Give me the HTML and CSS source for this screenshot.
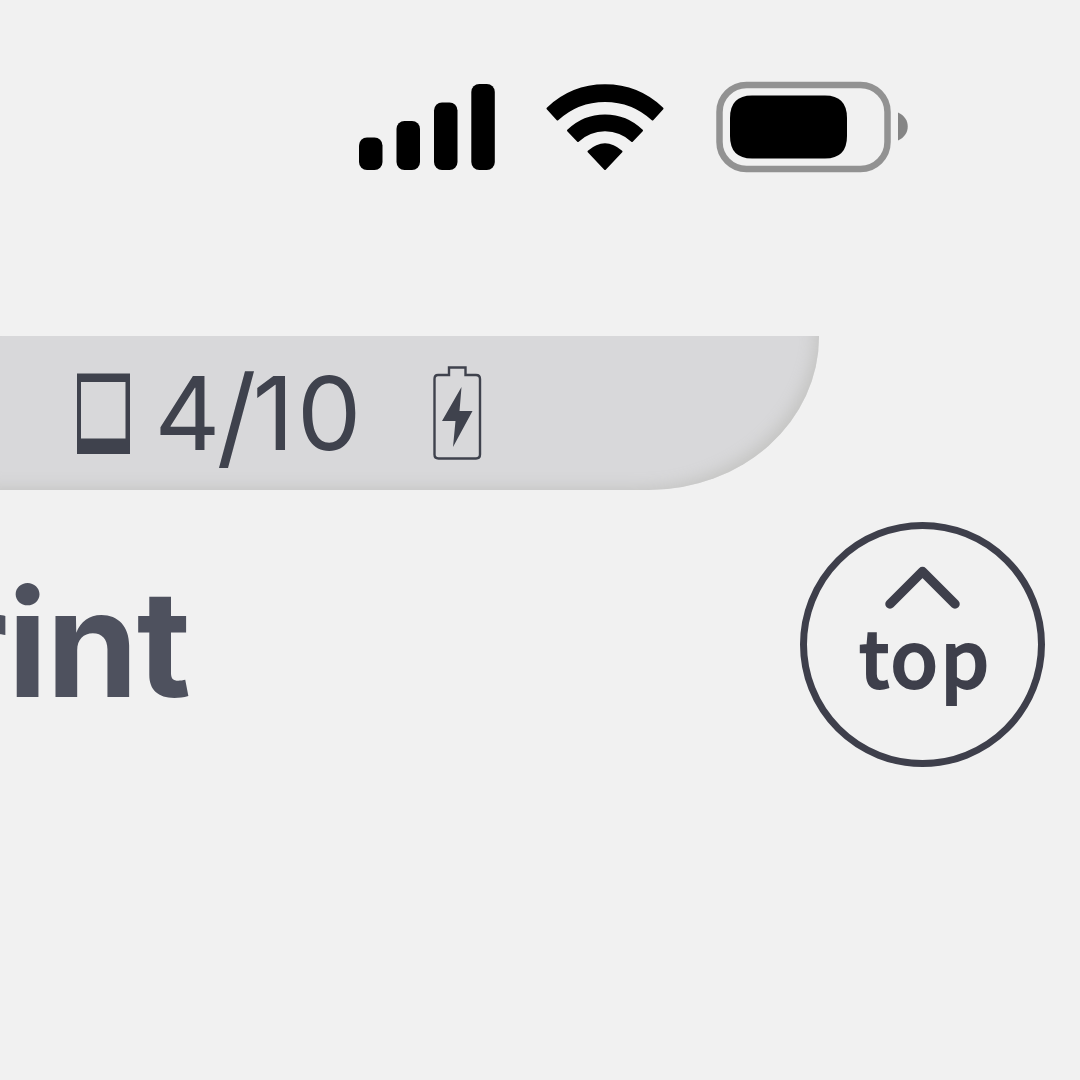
FILE: index.html
```html
<!DOCTYPE html>
<html lang="en">
<head>
<meta charset="utf-8">
<title>Print</title>
<link rel="stylesheet" href="styles.css">
</head>
<body>
<header class="status">
  <svg class="signal" width="136" height="86" viewBox="359 84 136 86"><rect x="359" y="137.5" width="23.5" height="32.5" rx="8"/><rect x="396.5" y="121" width="23.5" height="49" rx="8"/><rect x="434" y="102.5" width="23.5" height="67.5" rx="8"/><rect x="471.3" y="84" width="23.5" height="86" rx="8"/></svg>
  <svg class="wifi" width="118" height="87" viewBox="546.5 84 118 87"><g stroke="#000" stroke-linejoin="round" stroke-width="2"><path d="M548 108.500A83 83 0 0 1 663 108.500L653 119.500A70 70 0 0 0 558 119.500Z"/><path d="M568.500 130.500A53 53 0 0 1 642.500 130.500L632.500 141A39 39 0 0 0 578.500 141Z"/><path d="M589 151.500Q605.500 137 622 151.500L605.500 169Z"/></g></svg>
  <svg class="power" width="192" height="92" viewBox="716 81 192 92"><rect x="719.500" y="85" width="168" height="84" rx="27" fill="none" stroke="#929292" stroke-width="6.500"/><path d="M730 118Q730 95.500 752 95.500H825Q847 95.500 847 118V136Q847 158.500 825 158.500H752Q730 158.500 730 136Z"/><path d="M898 112.500C911 118 911 135 898 140.500Z" fill="#858585"/></svg>
</header>
<section class="counter-bar">
  <svg width="54" height="82" viewBox="77 373 54 82"><path fill-rule="evenodd" d="M77 373.500H130V454H77ZM81 382V438.500H125.500V382Z"/></svg>
  <span class="count">4<span class="slash">/</span><span class="one">1</span>0</span>
  <svg width="50" height="96" viewBox="432 365 50 96"><path d="M438 375H449V367.500H465.500V375H476Q480 375 480 379V454.500Q480 458.500 476 458.500H438.500Q434.500 458.500 434.500 454.500V379Q434.500 375 438 375Z" fill="none" stroke="#3f424d" stroke-width="2.400"/><path d="M461.500 387L442 421H455.500L453 447L472.500 411H459.500Z"/></svg>
</section>
<main class="content">
  <h1 class="title">Print</h1>
  <button class="top" type="button">
    <svg width="76" height="44" viewBox="885 566 76 44"><path d="M890 604L922.500 571.500L955 604" fill="none" stroke="#3e3f4b" stroke-width="9.500" stroke-linecap="round" stroke-linejoin="round"/></svg>
    <span class="top-label">top</span>
  </button>
</main>
</body>
</html>
```
FILE: styles.css
```css
* { box-sizing: border-box; }
body {
  margin: 0;
  width: 1080px;
  height: 1080px;
  overflow: hidden;
  background: #f1f1f1;
  font-family: Inter, "Liberation Sans", sans-serif;
}
svg { display: block; flex: none; }
.status {
  display: flex;
  align-items: flex-start;
  height: 336px;
  padding: 81px 0 0 359px;
}
.signal { margin-top: 3px; }
.wifi { margin: 3px 0 0 51px; }
.power { margin-left: 51.5px; }
.counter-bar {
  display: flex;
  align-items: flex-start;
  width: 819px;
  height: 153.5px;
  padding: 29px 0 0 77px;
  background: #d8d8da;
  border-bottom-right-radius: 170px 153px;
  box-shadow: inset -10px -9px 16px -7px #c4c4c2;
  color: #3f424d;
  fill: #3f424d;
}
.counter-bar svg:first-child { margin-top: 8px; }
.count {
  width: 301px;
  padding-left: 23.5px;
  font-size: 102px;
  line-height: 96px;
  letter-spacing: -4px;
}
.slash {
  font-size: 111px;
  line-height: 0;
  vertical-align: -6px;
}
.one { letter-spacing: 3px; }
.content {
  display: flex;
  justify-content: space-between;
  padding: 32.5px 35px 0 0;
}
.title {
  display: flex;
  justify-content: flex-end;
  width: 189.5px;
  margin: 32px 0 0;
  color: #4e515e;
  font-size: 148px;
  line-height: 180px;
  font-weight: 700;
  letter-spacing: -1.5px;
}
.top {
  display: flex;
  flex-direction: column;
  align-items: center;
  width: 245px;
  height: 245px;
  padding: 37px 0 0;
  border: 7px solid #3e3f4b;
  border-radius: 50%;
  background: transparent;
  color: #3e3f4b;
}
.top-label {
  margin: -4px 0 0 5px;
  font: 500 78px/96px "Noto Sans CJK JP", sans-serif;
  letter-spacing: 2px;
  -webkit-text-stroke: 1.8px #3e3f4b;
}
```
